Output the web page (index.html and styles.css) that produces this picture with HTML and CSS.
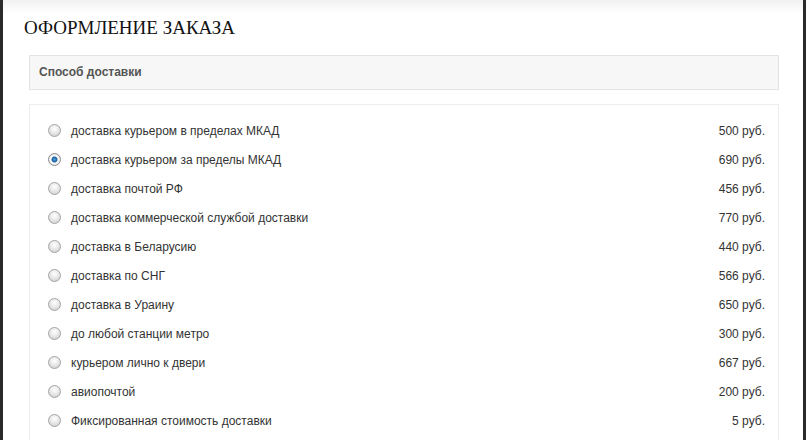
FILE: index.html
```html
<!DOCTYPE html>
<html lang="ru">
<head>
    <meta charset="UTF-8">
    <title>Оформление заказа</title>
    <link rel="stylesheet" href="styles.css">
</head>
<body>
    <div class="page">
        <h1 class="title">ОФОРМЛЕНИЕ ЗАКАЗА</h1>
        <div class="section-head">Способ доставки</div>
        <div class="delivery">
            <label class="row"><span class="radio"></span><span class="name">доставка курьером в пределах МКАД</span><span class="price">500 руб.</span></label>
            <label class="row"><span class="radio checked"></span><span class="name">доставка курьером за пределы МКАД</span><span class="price">690 руб.</span></label>
            <label class="row"><span class="radio"></span><span class="name">доставка почтой РФ</span><span class="price">456 руб.</span></label>
            <label class="row"><span class="radio"></span><span class="name">доставка коммерческой службой доставки</span><span class="price">770 руб.</span></label>
            <label class="row"><span class="radio"></span><span class="name">доставка в Беларусию</span><span class="price">440 руб.</span></label>
            <label class="row"><span class="radio"></span><span class="name">доставка по СНГ</span><span class="price">566 руб.</span></label>
            <label class="row"><span class="radio"></span><span class="name">доставка в Ураину</span><span class="price">650 руб.</span></label>
            <label class="row"><span class="radio"></span><span class="name">до любой станции метро</span><span class="price">300 руб.</span></label>
            <label class="row"><span class="radio"></span><span class="name">курьером лично к двери</span><span class="price">667 руб.</span></label>
            <label class="row"><span class="radio"></span><span class="name">авиопочтой</span><span class="price">200 руб.</span></label>
            <label class="row"><span class="radio"></span><span class="name">Фиксированная стоимость доставки</span><span class="price">5 руб.</span></label>
        </div>
    </div>
</body>
</html>
```

FILE: styles.css
```css
body{
    margin: 0;
    padding: 0;

    background-color: #2a2a2a;

    font-family: "Liberation Sans", Arial, sans-serif;
}

.page{
    margin: 0 3px;
    padding: 17px 0 20px 0;
    min-height: 440px;

    background: #fff linear-gradient(to bottom, #f1f1f1 0, #ffffff 14px);
}

.title{
    margin: 0 0 17px 21px;

    font-family: "Liberation Serif", "Times New Roman", serif;
    font-size: 19px;
    font-weight: normal;
    line-height: 21px;
    color: #111;
}

.section-head{
    margin: 0 24px 14px 26px;
    padding: 0 9px;
    height: 33px;
    line-height: 33px;

    border: 1px solid #e3e3e3;
    background-color: #f7f7f7;

    font-size: 12px;
    font-weight: bold;
    color: #555;
}

.delivery{
    margin: 0 24px 0 26px;
    padding: 11px 0;

    border: 1px solid #eeeeee;
}

.row{
    display: flex;
    align-items: center;
    height: 29px;
    padding: 0 13px 0 18px;

    font-size: 12px;
    color: #333;
}

.radio{
    box-sizing: border-box;
    width: 13px;
    height: 13px;
    margin-right: 10px;

    border: 1px solid #a4a4a4;
    border-radius: 50%;

    background: radial-gradient(circle at 50% 35%, #ffffff 0, #ececec 40%, #c8c8c8 100%);
}

.radio.checked{
    background: radial-gradient(circle at 50% 50%, #4da3e0 0, #1d5f9e 2.5px, #ffffff 3.5px, #ededed 5px, #cfcfcf 100%);
    border-color: #8a8a8a;
}

.name{
    flex: 1;
}

.price{
    text-align: right;
}
```
